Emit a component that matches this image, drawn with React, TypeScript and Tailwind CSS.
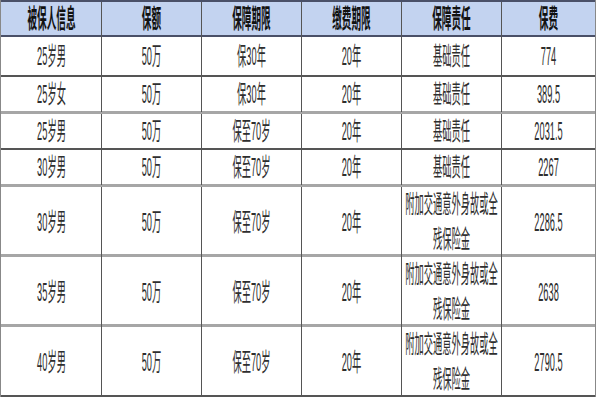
import React from 'react'

const rows = [
  { who: '25岁男', amt: '50万', term: '保30年', pay: '20年', duty: '基础责任', fee: '774', h: 'h-[40px]', b: 'border-b-2 border-[#555]' },
  { who: '25岁女', amt: '50万', term: '保30年', pay: '20年', duty: '基础责任', fee: '389.5', h: 'h-[37px]', b: 'border-b-[3px] border-[#a6a6a6]' },
  { who: '25岁男', amt: '50万', term: '保至70岁', pay: '20年', duty: '基础责任', fee: '2031.5', h: 'h-[36px]', b: 'border-b-2 border-[#555]' },
  { who: '30岁男', amt: '50万', term: '保至70岁', pay: '20年', duty: '基础责任', fee: '2267', h: 'h-[37px]', b: 'border-b-[3px] border-[#a6a6a6]' },
  { who: '30岁男', amt: '50万', term: '保至70岁', pay: '20年', duty: '附加交通意外身故或全残保险金', fee: '2286.5', h: 'h-[70px]', b: 'border-b-[3px] border-[#a6a6a6]' },
  { who: '35岁男', amt: '50万', term: '保至70岁', pay: '20年', duty: '附加交通意外身故或全残保险金', fee: '2638', h: 'h-[70px]', b: 'border-b-[3px] border-[#a6a6a6]' },
  { who: '40岁男', amt: '50万', term: '保至70岁', pay: '20年', duty: '附加交通意外身故或全残保险金', fee: '2790.5', h: 'h-[70px]', b: 'border-b-2 border-[#555]' },
]

const headers = ['被保人信息', '保额', '保障期限', '缴费期限', '保障责任', '保费']

// cells hold an unscaled block squeezed horizontally, like the stretched original
function Cell({ text, first, bold }: { text: string; first?: boolean; bold?: boolean }) {
  return (
    <div className={'flex min-w-0 items-center justify-center ' + (first ? '' : 'border-l border-[#555]')}>
      <div
        className={
          'w-[255px] shrink-0 scale-x-[0.37] text-center leading-[35px] ' +
          (bold ? 'text-[26px] font-bold text-[#111]' : 'text-[25px] text-[#2e2e2e]')
        }
      >
        {text}
      </div>
    </div>
  )
}

export default function App() {
  return (
    <div
      className="w-[600px] h-[400px] overflow-hidden bg-white"
      style={{ fontFamily: '"Liberation Sans", "Noto Sans CJK SC", sans-serif' }}
    >
      <div className="w-[596px] border-l border-r border-[#888]">
        <div className="grid h-[37px] grid-cols-[100px_100px_100px_100px_100px_94px] border-t-2 border-b-2 border-[#4a5068] bg-[#c3d3f0]">
          {headers.map((h, i) => (
            <Cell key={h} text={h} first={i === 0} bold />
          ))}
        </div>
        {rows.map((r, i) => (
          <div key={i} className={'grid grid-cols-[100px_100px_100px_100px_100px_94px] ' + r.h + ' ' + r.b}>
            <Cell text={r.who} first />
            <Cell text={r.amt} />
            <Cell text={r.term} />
            <Cell text={r.pay} />
            <Cell text={r.duty} />
            <Cell text={r.fee} />
          </div>
        ))}
      </div>
    </div>
  )
}
